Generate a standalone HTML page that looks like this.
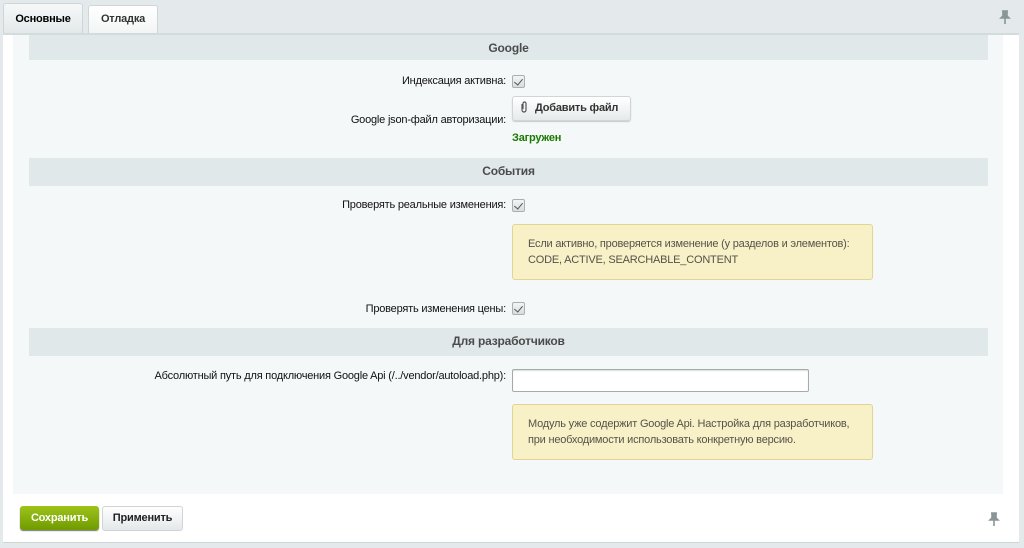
<!DOCTYPE html>
<html><head><meta charset="utf-8"><style>
*{box-sizing:border-box}
body{margin:0;width:1024px;height:548px;background:#e4eaec;font-family:"Liberation Sans",Arial,sans-serif;font-size:11px;color:#000;position:relative;overflow:hidden;letter-spacing:-0.2px}
.abs{position:absolute}
.tab{position:absolute;top:3px;height:30px;border:1px solid #cfd6d8;border-bottom:none;border-radius:3px 3px 0 0;font-weight:bold;font-size:11px;line-height:30px;text-align:center}
.panel{position:absolute;left:3px;top:33px;width:1016px;height:462px;background:#fff;border-top:2px solid #d3dbdd}
.inner{position:absolute;left:13px;top:35px;width:990px;height:459px;background:#f5f8f9}
.hdr{position:absolute;left:29px;width:959px;height:26px;background:#e0e8ea;text-align:center;font-weight:bold;font-size:12px;line-height:26px;color:#4b4b4b}
.lbl{position:absolute;right:518px;font-size:11px;color:#111;white-space:nowrap}
.cb{position:absolute;left:512px;width:13px;height:13px;border:1px solid #a8b0b3;border-radius:2px;background:linear-gradient(#f3f5f5,#d8dde0)}
.cb:after{content:"";position:absolute;left:3px;top:1px;width:4px;height:7px;border:solid #555;border-width:0 1.5px 1.5px 0;transform:rotate(40deg)}
.note{position:absolute;left:512px;width:361px;height:56px;background:#f8f0c6;border:1px solid #e2d591;border-radius:3px;padding:11px 15px;color:#55534a;line-height:16px;font-size:11px;white-space:nowrap}
</style></head><body>
<div class="tab" style="left:3px;width:80px;background:linear-gradient(#f6f8f8,#e3e9ea);color:#000">Основные</div>
<div class="tab" style="left:88px;width:70px;top:5px;height:28px;line-height:26px;background:linear-gradient(#fff,#f3f5f5);color:#333;font-size:11px">Отладка</div>
<svg class="abs" style="left:999px;top:10px" width="12" height="15" viewBox="0 0 12 15"><path d="M3 1h6M4 1v5l-2 2h8l-2-2V1M6 8v6" stroke="#8a9598" stroke-width="1.6" fill="#8a9598"/></svg>
<div class="panel"></div>
<div class="inner"></div>
<div class="hdr" style="top:35px;height:25px">Google</div>
<div class="lbl" style="top:75px">Индексация активна:</div>
<div class="cb" style="top:75px"></div>
<div class="abs" style="left:512px;top:96px;width:119px;height:25px;border:1px solid #d0d6d8;border-radius:3px;background:linear-gradient(#fff,#e6eaeb);box-shadow:0 1px 1px #c4cbcd;font-weight:bold;font-size:11px;line-height:22px;padding-left:22px;color:#333">Добавить файл</div>
<svg class="abs" style="left:520px;top:101px" width="8" height="12" viewBox="0 0 8 12"><path d="M2 3v6a2 2 0 0 0 4 0V2.5a1.5 1.5 0 0 0-3 0V8" stroke="#555" stroke-width="1.2" fill="none"/></svg>
<div class="lbl" style="top:114px">Google json-файл авторизации:</div>
<div class="abs" style="left:512px;top:132px;color:#1a7a00;font-weight:bold">Загружен</div>
<div class="hdr" style="top:158px;height:28px;line-height:27px">События</div>
<div class="lbl" style="top:199px">Проверять реальные изменения:</div>
<div class="cb" style="top:199px"></div>
<div class="note" style="top:224px">Если активно, проверяется изменение (у разделов и элементов):<br>CODE, ACTIVE, SEARCHABLE_CONTENT</div>
<div class="lbl" style="top:303px">Проверять изменения цены:</div>
<div class="cb" style="top:302px"></div>
<div class="hdr" style="top:328px;height:28px;line-height:27px">Для разработчиков</div>
<div class="lbl" style="top:370px">Абсолютный путь для подключения Google Api (/../vendor/autoload.php):</div>
<div class="abs" style="left:512px;top:369px;width:297px;height:23px;background:#fff;border:1px solid #a4abad;border-radius:2px;box-shadow:inset 0 1px 1px #ddd"></div>
<div class="note" style="top:404px">Модуль уже содержит Google Api. Настройка для разработчиков,<br>при необходимости использовать конкретную версию.</div>
<div class="abs" style="left:3px;top:495px;width:1016px;height:48px;background:#fff;border-bottom:1px solid #cdd5d7"></div>
<div class="abs" style="left:20px;top:506px;width:79px;height:24px;background:linear-gradient(#9ec31a,#6f9b00);border-radius:3px;color:#fff;font-weight:bold;font-size:11px;line-height:24px;text-align:center;box-shadow:0 1px 1px #777">Сохранить</div>
<div class="abs" style="left:102px;top:506px;width:81px;height:25px;background:linear-gradient(#fff,#e4e8e9);border:1px solid #cfd5d7;border-radius:3px;color:#222;font-weight:bold;font-size:11px;line-height:23px;text-align:center">Применить</div>
<svg class="abs" style="left:988px;top:512px" width="12" height="15" viewBox="0 0 12 15"><path d="M3 1h6M4 1v5l-2 2h8l-2-2V1M6 8v6" stroke="#8a9598" stroke-width="1.6" fill="#8a9598"/></svg>
</body></html>
